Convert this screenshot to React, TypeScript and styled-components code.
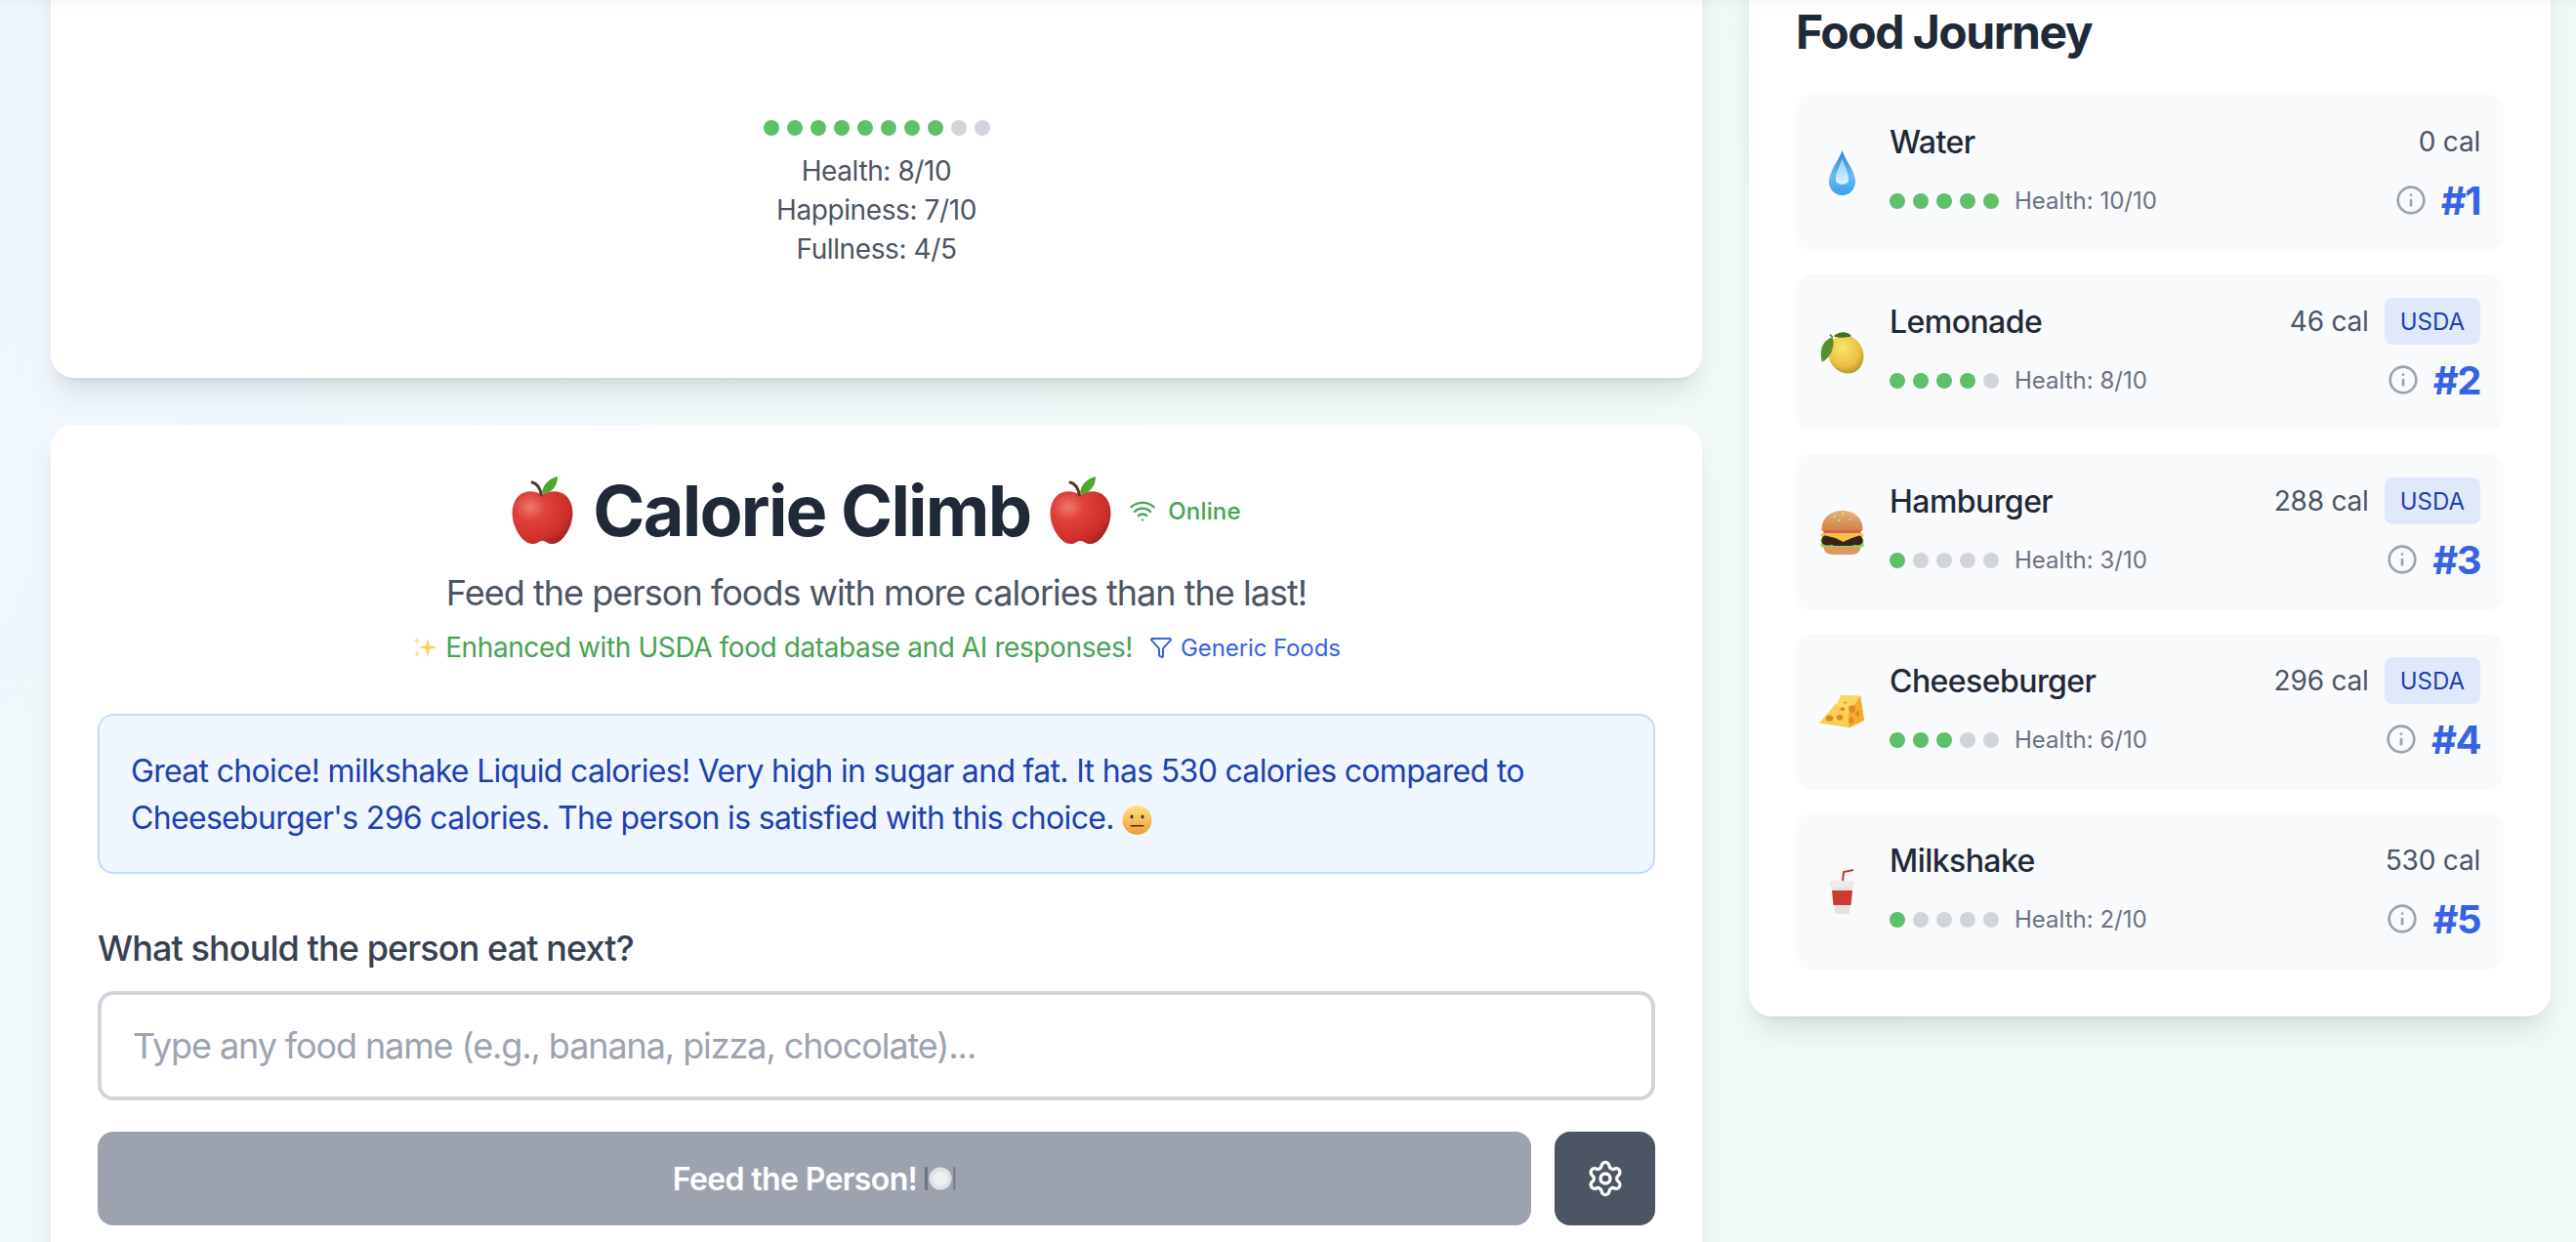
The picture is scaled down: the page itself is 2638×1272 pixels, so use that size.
import React from "react";
import styled, { createGlobalStyle } from "styled-components";
import { Wifi, Funnel, Info, Settings } from "lucide-react";

const Global = createGlobalStyle`
  html, body { margin: 0; height: 1272px; overflow: hidden; }
  body {
    font-family: Inter, "Liberation Sans", sans-serif;
    background: linear-gradient(135deg, #eff6ff 0%, #f1faf6 55%, #f1fbf6 100%);
    color: #1f2937;
  }
  * { box-sizing: border-box; }
`;

const TopFade = styled.div`
  position: fixed; top: 0; left: 0; right: 0; height: 12px;
  background: linear-gradient(to bottom, rgba(0,0,0,.022), rgba(0,0,0,0));
  pointer-events: none;
`;
const Layout = styled.div`
  display: grid; grid-template-columns: 1691px 821px; gap: 48px;
  align-items: start; margin-top: -47px; padding-left: 52px;
`;
const Column = styled.div`display: flex; flex-direction: column; gap: 48px;`;
const Card = styled.section`
  background: #fff; border-radius: 24px;
  box-shadow: 0 20px 30px -6px rgba(0,0,0,.1), 0 8px 12px -8px rgba(0,0,0,.1);
`;
const StatusCard = styled(Card)`
  display: flex; flex-direction: column; align-items: center;
  padding: 170px 48px 112px;
`;
const GameCard = styled(Card)`padding: 48px;`;
const JourneyCard = styled(Card)`padding: 48px;`;

const Dots = styled.div<{ $mb?: number }>`
  display: flex; gap: 8px; margin-bottom: ${p => p.$mb ?? 0}px;
`;
const Dot = styled.span<{ $on: boolean }>`
  width: 16px; height: 16px; border-radius: 50%;
  background: ${p => (p.$on ? "#5cc169" : "#d1d5db")};
`;
const Stat = styled.div`
  font-size: 28px; line-height: 40px; color: #4b5563; text-align: center; letter-spacing: -.4px;
`;

const TitleRow = styled.div`
  display: flex; justify-content: center; align-items: center; height: 80px;
`;
const Title = styled.h1`
  margin: 0; display: flex; align-items: center; gap: 20px;
  font-size: 72px; line-height: 80px; font-weight: 700; color: #1f2937; letter-spacing: -1.8px;
`;
const Online = styled.span`
  display: inline-flex; align-items: center; gap: 12px; margin-left: 18px;
  font-size: 24px; font-weight: 500; color: #46a352; letter-spacing: .15px;
`;
const Subtitle = styled.p`
  margin: 16px 0 0; text-align: center; font-size: 36px; line-height: 56px; color: #4b5563; letter-spacing: -.98px;
`;
const Enhanced = styled.div`
  display: flex; justify-content: center; align-items: center; margin-top: 8px; height: 40px;
  font-size: 28px; color: #46a352; letter-spacing: -.4px;
`;
const Sparkle = styled.span`display: inline-flex; margin-right: 8px;`;
const Generic = styled.span`
  display: inline-flex; align-items: center; gap: 8px; margin-left: 17px;
  font-size: 24px; color: #3563e3; letter-spacing: -.1px;
`;
const Message = styled.div`
  margin-top: 48px; padding: 33px 32px 31px; border: 2px solid #bfdbfe; border-radius: 16px;
  background: #eff6ff; color: #1e40af; font-size: 32px; line-height: 48px; letter-spacing: -.68px;
`;
const InlineIcon = styled.svg`vertical-align: -6px;`;
const Label = styled.label`
  display: block; margin-top: 48px; margin-bottom: 16px;
  font-size: 36px; line-height: 56px; font-weight: 500; color: #374151; letter-spacing: -.9px;
`;
const FoodInput = styled.input`
  display: block; width: 100%; height: 112px; padding: 0 32px;
  border: 4px solid #d1d5db; border-radius: 16px; background: #fff; outline: none;
  font-family: inherit; font-size: 36px; color: #1f2937; letter-spacing: -1.1px;
  &::placeholder { color: #9ca3af; opacity: 1; }
`;
const Actions = styled.div`display: flex; gap: 24px; margin-top: 32px;`;
const FeedButton = styled.button`
  flex: 1; height: 96px; display: flex; align-items: center; justify-content: center; gap: 8px;
  border: 0; border-radius: 16px; background: #9ca3af; color: #fff;
  font-family: inherit; font-size: 32px; font-weight: 600; letter-spacing: -.63px;
`;
const GearButton = styled.button`
  width: 103px; height: 96px; display: flex; align-items: center; justify-content: center;
  border: 0; border-radius: 16px; background: #4b5563; color: #fff;
`;

const JourneyTitle = styled.h2`
  margin: 0 0 32px; font-size: 48px; line-height: 64px; font-weight: 700; color: #1f2937; letter-spacing: -1.5px;
`;
const List = styled.div`display: flex; flex-direction: column; gap: 24px;`;
const Item = styled.article`
  display: flex; align-items: center; gap: 26px; height: 160px; padding: 24px;
  background: #f9fafb; border-radius: 16px;
`;
const EmojiBox = styled.div`
  width: 46px; height: 48px; display: flex; justify-content: center; align-items: center; flex: none;
`;
const ItemBody = styled.div`flex: 1; min-width: 0;`;
const RowTop = styled.div`
  display: flex; justify-content: space-between; align-items: center; height: 48px; margin-bottom: 8px;
`;
const Name = styled.span`
  font-size: 32px; line-height: 48px; font-weight: 500; color: #1f2937; letter-spacing: -.56px; margin-top: 1px;
`;
const CalGroup = styled.div`display: flex; align-items: center; gap: 16px;`;
const Cal = styled.span`font-size: 28px; color: #4b5563; letter-spacing: -.2px;`;
const Badge = styled.span`
  display: flex; align-items: center; height: 48px; padding: 0 16px; border-radius: 8px;
  background: #dfe9fb; color: #1e40af; font-size: 24px;
`;
const RowBottom = styled.div`
  display: flex; justify-content: space-between; align-items: center; height: 56px;
`;
const HealthGroup = styled.div`display: flex; align-items: center; gap: 16px; margin-top: 1px;`;
const HealthText = styled.span`font-size: 24px; color: #6b7280;`;
const RankGroup = styled.div`display: flex; align-items: center; gap: 15px; color: #9ca3af;`;
const Rank = styled.span`font-size: 40px; font-weight: 700; color: #3563e3; letter-spacing: -1.5px;`;

const AppleIcon = ({ id }: { id: string }) => (
  <svg width="63" height="70" viewBox="0 0 63 70" aria-hidden="true">
    <defs>
      <radialGradient id={id} cx=".3" cy=".3" r=".85">
        <stop offset="0" stopColor="#ee7a6e" />
        <stop offset=".3" stopColor="#e0423a" />
        <stop offset=".75" stopColor="#cc2f2a" />
        <stop offset="1" stopColor="#8e1d1b" />
      </radialGradient>
    </defs>
    <path fill={`url(#${id})`} d="M31 19C24 14 13 14 7 20C-1 28 -1 42 4 53C8 62 15 70 23 69C27 68.500 28 66 31.500 66C35 66 36 68.500 40 69C48 70 55 62 59 53C64 42 64 28 56 20C50 14 38 14 31 19Z" />
    <path fill="none" stroke="#57382a" strokeWidth="3" strokeLinecap="round" d="M21 6C26 7 29 12 30.500 19" />
    <path fill="#4fa62d" d="M31 18C31 9 38 2 47 0C47 9 42 17 31 18Z" />
  </svg>
);
const DropIcon = () => (
  <svg width="27" height="46" viewBox="0 0 27 46" aria-hidden="true">
    <defs>
      <linearGradient id="dropG" x1="0" y1="0" x2="0" y2="1">
        <stop offset="0" stopColor="#2f7fd0" />
        <stop offset=".55" stopColor="#69bdf2" />
        <stop offset="1" stopColor="#3aa2ea" />
      </linearGradient>
      <linearGradient id="dropH" x1="0" y1="0" x2="0" y2="1">
        <stop offset="0" stopColor="#8fd0f7" />
        <stop offset="1" stopColor="#d8f2ff" />
      </linearGradient>
    </defs>
    <path fill="url(#dropG)" d="M13.500 0C16 9 27 21 27 32A13.500 14 0 0 1 0 32C0 21 11 9 13.500 0Z" />
    <path fill="url(#dropH)" d="M13.500 8C15 15 21 24 20 31C19 36 8 36 7 31C6 24 12 15 13.500 8Z" />
  </svg>
);
const LemonIcon = () => (
  <svg width="47" height="44" viewBox="0 0 47 44" aria-hidden="true">
    <defs>
      <radialGradient id="lemonG" cx=".5" cy=".3" r=".8">
        <stop offset="0" stopColor="#fde468" />
        <stop offset=".6" stopColor="#ecc044" />
        <stop offset="1" stopColor="#ab8029" />
      </radialGradient>
    </defs>
    <ellipse cx="28" cy="24" rx="18" ry="20.500" transform="rotate(-25 28 24)" fill="url(#lemonG)" />
    <path fill="#3f6d22" d="M15 5C21 0 29 -1 34 5C26 7 20 7 15 5Z" />
    <path fill="#568f30" d="M14 6C5 9 -1 18 3 32C12 27 17 16 14 6Z" />
    <path stroke="#6b6257" strokeWidth="1.500" d="M11 3L14 6" />
  </svg>
);
const BurgerIcon = () => (
  <svg width="45" height="45" viewBox="0 0 44 45" aria-hidden="true">
    <defs>
      <linearGradient id="bunG" x1="0" y1="0" x2="0" y2="1">
        <stop offset="0" stopColor="#e6b07a" />
        <stop offset="1" stopColor="#c9813f" />
      </linearGradient>
    </defs>
    <path fill="url(#bunG)" d="M1 19C1 6 12 0 22 0C32 0 43 6 43 19C43 21 41 22 38 22H6C3 22 1 21 1 19Z" />
    <g fill="#f3e3c4">
      <ellipse cx="14" cy="6" rx="1.300" ry=".8" /><ellipse cx="23" cy="3" rx="1.300" ry=".8" />
      <ellipse cx="30" cy="9" rx="1.300" ry=".8" /><ellipse cx="19" cy="10" rx="1.300" ry=".8" />
    </g>
    <rect x="3" y="20" width="38" height="5" rx="2.500" fill="#df5a50" />
    <rect x="0" y="23" width="44" height="4" rx="2" fill="#f5c340" />
    <path fill="#8fd85e" d="M0 32C4 38 8 39 12 37C16 40 20 38 24 38C28 40 32 38 36 37C39 37 43 36 44 32V29H0Z" />
    <rect x="1" y="25" width="42" height="11" rx="5" fill="#38221a" />
    <path fill="#f5c340" d="M3 25H41L32 28L23 32L15 28Z" />
    <path fill="#8fd85e" d="M0 33C4 36 7 36 11 35C15 37 19 36 23 36C27 37 32 36 35 35C38 36 42 35 44 33V37C40 38 36 38 33 38H11C7 38 3 38 0 37Z" />
    <path fill="#d99a5e" d="M3 37H41C41 42 37 45 31 45H13C7 45 3 42 3 37Z" />
  </svg>
);
const CheeseIcon = () => (
  <svg width="48" height="36" viewBox="0 0 48 36" aria-hidden="true">
    <path fill="#fbcd50" d="M0 30L18 9L20 9L23 0L44 1L48 27L32 35Z" />
    <path fill="#f4ab30" d="M44 1L48 27L32 35L31 20Z" />
    <path fill="#fde27c" d="M23 0L44 1L31 20L18 9Z" opacity=".45" />
    <g fill="#db8c22">
      <ellipse cx="11" cy="25" rx="4" ry="3" />
      <ellipse cx="22" cy="24" rx="3.500" ry="3" />
      <ellipse cx="25" cy="15" rx="2.500" ry="2" />
      <ellipse cx="35" cy="15" rx="3.500" ry="4" />
      <ellipse cx="34" cy="27" rx="2.500" ry="3.500" />
      <ellipse cx="41" cy="20" rx="2" ry="3" />
      <ellipse cx="28" cy="8" rx="1.500" ry="1" />
    </g>
  </svg>
);
const CupIcon = () => (
  <svg width="25" height="46" viewBox="0 0 25 46" aria-hidden="true">
    <path fill="none" stroke="#c8352d" strokeWidth="2" d="M13 13L14 3L24 1" />
    <rect x="0" y="12" width="25" height="7" rx="2" fill="#ececec" />
    <path fill="#e3e3e3" d="M2 19H23L20 44Q20 46 18 46H7Q5 46 5 44Z" />
    <path fill="#cb3b32" d="M2 22H23L21.500 37H3.500Z" />
  </svg>
);
const PlateIcon = () => (
  <svg width="32" height="26" viewBox="0 0 32 26" aria-hidden="true">
    <rect x="0" y="1" width="3" height="24" rx="1" fill="#6b7280" />
    <rect x="29" y="1" width="2.500" height="24" rx="1" fill="#7b828e" />
    <circle cx="16" cy="13" r="11.500" fill="#dfe2e6" />
    <circle cx="16" cy="13" r="7.500" fill="#eef0f2" />
  </svg>
);
const SparklesIcon = () => (
  <svg width="26" height="22" viewBox="0 0 26 22" aria-hidden="true">
    <path fill="#fbd35a" d="M16 2L18 9L25 11L18 13L16 21L14 13L7 11L14 9Z" />
    <path fill="#fbe29a" d="M5 0L6 3L9 4L6 5L5 8L4 5L1 4L4 3Z" />
    <path fill="#fbe29a" d="M5 14L6 16.500L8 17.500L6 18.500L5 21L4 18.500L2 17.500L4 16.500Z" />
  </svg>
);
const FaceIcon = () => (
  <InlineIcon width="31" height="30" viewBox="0 0 31 30" aria-hidden="true">
    <defs>
      <linearGradient id="faceG" x1="0" y1="0" x2="0" y2="1">
        <stop offset="0" stopColor="#fde480" />
        <stop offset="1" stopColor="#ee9c36" />
      </linearGradient>
    </defs>
    <circle cx="15.500" cy="15" r="15" fill="url(#faceG)" />
    <ellipse cx="10" cy="11.500" rx="1.500" ry="2" fill="#4a3318" />
    <ellipse cx="21" cy="11.500" rx="1.500" ry="2" fill="#4a3318" />
    <rect x="8.500" y="20" width="14" height="1.500" rx=".7" fill="#4a3318" />
  </InlineIcon>
);

type Food = { name: string; cal: number; usda: boolean; health: number; on: number; icon: React.ReactNode };
const foods: Food[] = [
  { name: "Water", cal: 0, usda: false, health: 10, on: 5, icon: <DropIcon /> },
  { name: "Lemonade", cal: 46, usda: true, health: 8, on: 4, icon: <LemonIcon /> },
  { name: "Hamburger", cal: 288, usda: true, health: 3, on: 1, icon: <BurgerIcon /> },
  { name: "Cheeseburger", cal: 296, usda: true, health: 6, on: 3, icon: <CheeseIcon /> },
  { name: "Milkshake", cal: 530, usda: false, health: 2, on: 1, icon: <CupIcon /> },
];

const Meter = ({ on, total, mb }: { on: number; total: number; mb?: number }) => (
  <Dots $mb={mb}>
    {Array.from({ length: total }, (_, i) => <Dot key={i} $on={i < on} />)}
  </Dots>
);

export default function App() {
  return (
    <>
      <Global />
      <Layout>
        <Column>
          <StatusCard>
            <Meter on={8} total={10} mb={16} />
            <Stat>Health: 8/10</Stat>
            <Stat>Happiness: 7/10</Stat>
            <Stat>Fullness: 4/5</Stat>
          </StatusCard>
          <GameCard>
            <TitleRow>
              <Title>
                <AppleIcon id="appleA" />
                <span>Calorie Climb</span>
                <AppleIcon id="appleB" />
              </Title>
              <Online><Wifi size={28} strokeWidth={2} />Online</Online>
            </TitleRow>
            <Subtitle>Feed the person foods with more calories than the last!</Subtitle>
            <Enhanced>
              <Sparkle><SparklesIcon /></Sparkle>
              Enhanced with USDA food database and AI responses!
              <Generic><Funnel size={24} strokeWidth={2} />Generic Foods</Generic>
            </Enhanced>
            <Message>
              Great choice! milkshake Liquid calories! Very high in sugar and fat. It has 530 calories compared to Cheeseburger's 296 calories. The person is satisfied with this choice. <FaceIcon />
            </Message>
            <Label htmlFor="food">What should the person eat next?</Label>
            <FoodInput id="food" placeholder="Type any food name (e.g., banana, pizza, chocolate)..." />
            <Actions>
              <FeedButton disabled>Feed the Person!<PlateIcon /></FeedButton>
              <GearButton aria-label="Settings"><Settings size={40} strokeWidth={2} /></GearButton>
            </Actions>
          </GameCard>
        </Column>
        <JourneyCard>
          <JourneyTitle>Food Journey</JourneyTitle>
          <List>
            {foods.map((f, i) => (
              <Item key={f.name}>
                <EmojiBox>{f.icon}</EmojiBox>
                <ItemBody>
                  <RowTop>
                    <Name>{f.name}</Name>
                    <CalGroup>
                      <Cal>{f.cal} cal</Cal>
                      {f.usda && <Badge>USDA</Badge>}
                    </CalGroup>
                  </RowTop>
                  <RowBottom>
                    <HealthGroup>
                      <Meter on={f.on} total={5} />
                      <HealthText>Health: {f.health}/10</HealthText>
                    </HealthGroup>
                    <RankGroup>
                      <Info size={32} strokeWidth={2} />
                      <Rank>#{i + 1}</Rank>
                    </RankGroup>
                  </RowBottom>
                </ItemBody>
              </Item>
            ))}
          </List>
        </JourneyCard>
      </Layout>
      <TopFade />
    </>
  );
}
